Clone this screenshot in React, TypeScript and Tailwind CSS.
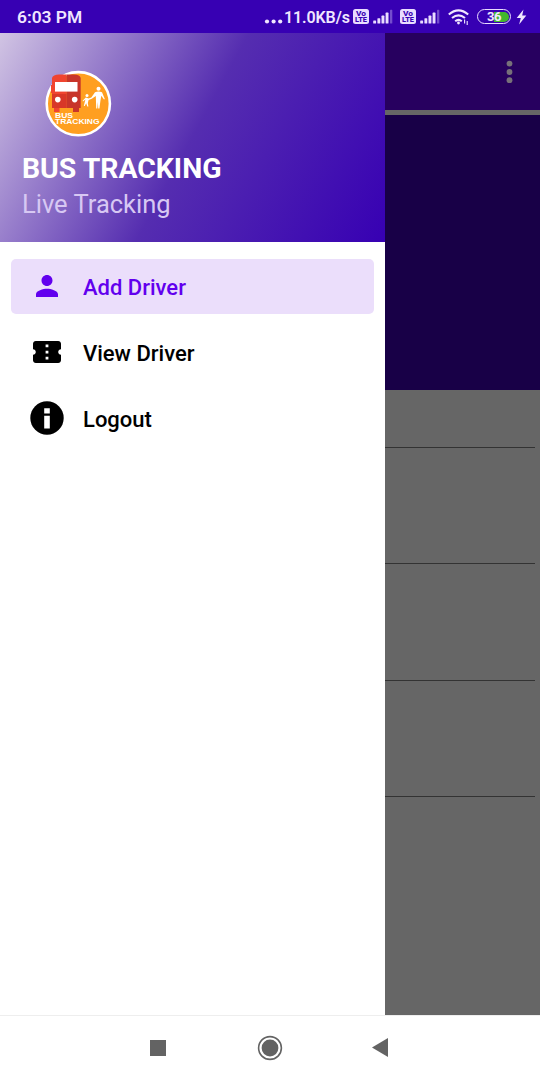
import React from "react";

function SignalIcon() {
  return (
    <svg className="h-[17px] w-[20px] shrink-0" viewBox="0 0 20 17" fill="#e9dcff">
      <rect x="0.2" y="12.4" width="2.9" height="3.1" rx="0.6" />
      <rect x="4.4" y="10.2" width="2.9" height="5.3" rx="0.6" />
      <rect x="8.5" y="7.6" width="2.9" height="7.9" rx="0.6" />
      <rect x="12.6" y="4.6" width="2.9" height="10.9" rx="0.6" />
      <rect x="17" y="1.8" width="2.3" height="13.7" rx="0.6" opacity="0.35" />
    </svg>
  );
}

function VolteIcon() {
  return (
    <svg className="h-[15px] w-[16px] shrink-0" viewBox="0 0 16 15" fill="#3700b3" fontSize="7.2" fontWeight="800">
      <rect width="16" height="15" rx="2.5" fill="#e9dcff" />
      <text x="3" y="6.6" textLength="10" lengthAdjust="spacingAndGlyphs">Vo</text>
      <text x="2" y="13.2" textLength="12" lengthAdjust="spacingAndGlyphs">LTE</text>
    </svg>
  );
}

function StatusBar() {
  return (
    <div className="flex h-[33px] shrink-0 items-center bg-[#3700b3] pl-[17px] text-[#f0e6ff]">
      <span className="w-[247px] text-[17.4px] leading-5 font-semibold whitespace-nowrap">6:03 PM</span>
      <svg className="mt-[9px] h-[5px] w-[20px] shrink-0" viewBox="0 0 20 5" fill="currentColor">
        <circle cx="3" cy="2.5" r="2.1" />
        <circle cx="9.6" cy="2.5" r="2.1" />
        <circle cx="16.2" cy="2.5" r="2.1" />
      </svg>
      <span className="w-[69px] pt-[2px] text-[16px] leading-5 font-semibold tracking-[-0.1px] whitespace-nowrap">11.0KB/s</span>
      <VolteIcon />
      <div className="ml-[4px] w-[27px]"><SignalIcon /></div>
      <VolteIcon />
      <div className="ml-[4px] w-[28px]"><SignalIcon /></div>
      <svg className="h-[18px] w-[22px] shrink-0" viewBox="0 0 22 18" fill="none" stroke="currentColor" strokeWidth="2.1">
        <path d="M0.8 6.5Q10.5-1.7 20.2 6.5M4 10Q10.5 4.6 17 10M7.2 13.2Q10.5 10.4 13.8 13.2" />
        <circle cx="10.5" cy="15" r="1.4" fill="currentColor" stroke="none" />
        <path strokeWidth="1.1" d="M16.6 11.5v4M19.2 13v4" />
      </svg>
      <div className="ml-[7px] flex h-[15px] w-[34px] shrink-0 items-center rounded-full border-[1.6px] border-[#e9dcff] p-[1.5px]">
        <div className="flex h-full w-full items-center justify-center rounded-full bg-[linear-gradient(90deg,transparent_50%,#42b72d_50%)] text-[13px] leading-none font-bold tracking-[-0.4px]">
          36
        </div>
      </div>
      <svg className="ml-[5px] h-[16px] w-[11px] shrink-0" viewBox="0 0 11 16" fill="currentColor">
        <path d="M7.5 0.5L0.7 9H4.8L3.1 15.4L10.3 6.4H6.2Z" />
      </svg>
    </div>
  );
}

function Logo() {
  return (
    <svg className="h-[68px] w-[68px]" viewBox="0 0 68 68">
      <circle cx="33.3" cy="33.7" r="31.6" fill="#ff9f20" stroke="#fff" strokeWidth="2.6" />
      <path d="M7 8Q8 4.6 14 4.4H21.5V38H14.5V42H9V38H7V23H6V15H7Z" fill="#f04430" />
      <path d="M21.5 4.4H29Q35 4.6 35.7 8V38H34V42H28V38H21.5Z" fill="#c8352a" />
      <path d="M10 12H32.5V21.6H10Z" fill="#fff" />
      <path d="M7 24H21.5V38H7Z" fill="#d83728" />
      <circle cx="12.8" cy="29.6" r="2.8" fill="#fff" />
      <circle cx="29.7" cy="29.6" r="2.8" fill="#fff" />
      <g fill="#fff">
        <circle cx="53.5" cy="18.8" r="2" />
        <path d="M50 22.3Q53.5 20.8 57 22.3L59.8 29L59 29.4L56.3 25.7L55.4 31L54.4 38.5H53.2L52.9 32L52.3 38.5H51.2L50.8 25.9L46.8 28.8L43.6 30L42.8 33L43.4 36.5H42.3L41.2 33.2L39.7 36H38.8L40.4 29.6L38 31.5L37.6 30.8L40.8 27.6L43.6 28.4L46.3 27.4Z" />
        <circle cx="42" cy="25.6" r="1.5" />
      </g>
      <g fill="#fff" fontFamily="Liberation Sans, sans-serif" fontWeight="700" fontSize="7.4">
        <text x="10" y="47.8" textLength="18" lengthAdjust="spacingAndGlyphs">BUS</text>
        <text x="10" y="54.4" textLength="44.5" lengthAdjust="spacingAndGlyphs">TRACKING</text>
      </g>
    </svg>
  );
}

function DrawerItem({ icon, label, active = false }: { icon: React.ReactNode; label: string; active?: boolean }) {
  return (
    <div
      className={`flex h-[55px] items-center rounded-[5px] pl-[18px] text-[22px] font-medium ${
        active ? "bg-[#ebdefb] text-[#6200ee]" : "text-black"
      }`}
    >
      <div className="flex w-9 items-center justify-center pb-[2px]">{icon}</div>
      <span className="ml-[18px] pt-px whitespace-nowrap">{label}</span>
    </div>
  );
}

function Drawer() {
  return (
    <aside className="flex w-[385px] shrink-0 flex-col bg-white">
      <header className="flex h-[209px] flex-col bg-[linear-gradient(118.5deg,#d1c4e3_0%,#552db0_50%,#3700b3_100%)] pt-[37px] pl-[22px]">
        <div className="ml-[23px]"><Logo /></div>
        <h1 className="mt-[13px] text-[28.4px] leading-9 font-bold whitespace-nowrap text-white">BUS TRACKING</h1>
        <p className="-mt-px text-[25.5px] leading-9 whitespace-nowrap text-[#d7c8f3]">Live Tracking</p>
      </header>
      <nav className="flex flex-col gap-[11px] px-[11px] pt-[17px]">
        <DrawerItem
          active
          label="Add Driver"
          icon={
            <svg className="h-[22px] w-[22px]" viewBox="4 4 16 16" fill="currentColor">
              <path d="M12 12c2.21 0 4-1.79 4-4s-1.79-4-4-4-4 1.79-4 4 1.79 4 4 4zm0 2c-2.67 0-8 1.34-8 4v2h16v-2c0-2.66-5.33-4-8-4z" />
            </svg>
          }
        />
        <DrawerItem
          label="View Driver"
          icon={
            <svg className="h-[22px] w-[28px]" viewBox="2 4 20 16" preserveAspectRatio="none" fill="currentColor">
              <path d="M20 12c0-1.1.9-2 2-2V6c0-1.1-.9-2-2-2H4c-1.1 0-1.99.9-1.99 2v4c1.1 0 1.99.9 1.99 2s-.89 2-2 2v4c0 1.1.9 2 2 2h16c1.1 0 2-.9 2-2v-4c-1.1 0-2-.9-2-2zm-7 5.5h-2v-2h2v2zm0-4.5h-2v-2h2v2zm0-4.5h-2v-2h2v2z" />
            </svg>
          }
        />
        <DrawerItem
          label="Logout"
          icon={
            <svg className="h-[34px] w-[34px]" viewBox="0 0 34 34">
              <circle cx="17" cy="17" r="16.7" />
              <path d="M14.2 7.2H19.8V12.4H14.2ZM14.2 14.8H19.8V27.5H14.2Z" fill="#fff" />
            </svg>
          }
        />
      </nav>
    </aside>
  );
}

function DimmedPage() {
  return (
    <main className="flex flex-1 flex-col bg-[#666666]">
      <div className="flex h-[77px] shrink-0 items-center justify-end bg-[#27005f] pr-[27px]">
        <svg className="h-6 w-[7px]" viewBox="0 0 7 24" fill="#777079">
          <circle cx="3.5" cy="3.6" r="2.9" />
          <circle cx="3.5" cy="12" r="2.9" />
          <circle cx="3.5" cy="20.2" r="2.9" />
        </svg>
      </div>
      <div className="mt-[5px] h-[275px] shrink-0 bg-[#180047]" />
      <div className="flex flex-col pr-[5px]">
        <div className="h-[58px] border-b border-[#333333]" />
        <div className="h-[116px] border-b border-[#333333]" />
        <div className="h-[117px] border-b border-[#333333]" />
        <div className="h-[116px] border-b border-[#333333]" />
      </div>
    </main>
  );
}

function NavigationBar() {
  return (
    <footer className="flex h-[65px] shrink-0 items-center border-t border-[#eeeeee] bg-white pb-px pl-[150px]">
      <div className="h-4 w-4 bg-[#636363]" />
      <svg className="ml-[91px] h-[26px] w-[26px]" viewBox="0 0 26 26">
        <circle cx="13" cy="13" r="11.4" fill="none" stroke="#636363" strokeWidth="1.6" />
        <circle cx="13" cy="13" r="8.4" fill="#636363" />
      </svg>
      <svg className="ml-[89px] h-[19px] w-[16px]" viewBox="0 0 16 19" fill="#636363">
        <path d="M0 9.5L16 0V19Z" />
      </svg>
    </footer>
  );
}

export default function App() {
  return (
    <div className="flex h-[1080px] w-[540px] flex-col overflow-hidden bg-white font-['Roboto',sans-serif]">
      <StatusBar />
      <div className="flex min-h-0 flex-1">
        <Drawer />
        <DimmedPage />
      </div>
      <NavigationBar />
    </div>
  );
}
